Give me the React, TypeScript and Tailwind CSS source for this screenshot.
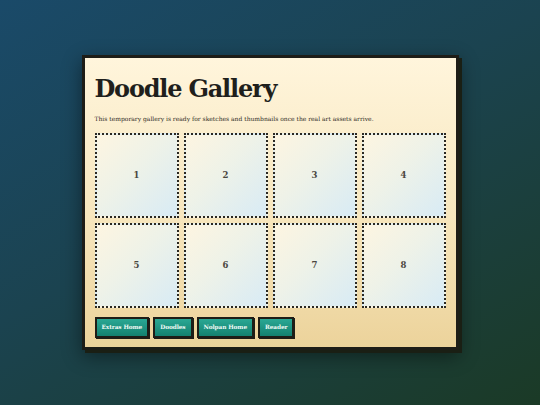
const tiles = [1, 2, 3, 4, 5, 6, 7, 8];

const links = ['Extras Home', 'Doodles', 'Nolpan Home', 'Reader'];

export default function App() {
  return (
    <div className="min-h-screen w-full flex items-center justify-center bg-[linear-gradient(150deg,#1a4a69_0%,#1b4350_45%,#1b3a26_100%)] font-['DejaVu_Serif',serif]">
      <div className="w-[377px] border-[3px] border-[#1e1d17] bg-[linear-gradient(180deg,#fff5dc_0%,#f7e6bd_55%,#ecd39b_100%)] px-[10px] pt-[15px] pb-[9px] shadow-[3px_3px_0_#1a1f14,0_6px_18px_rgba(0,0,0,0.45)]">
        <h1 className="text-[24px] leading-[32px] font-bold text-[#1f1f1c] tracking-[-1.2px]">Doodle Gallery</h1>
        <p className="mt-[9px] text-[6px] leading-[10px] text-[#2d2a24]">
          This temporary gallery is ready for sketches and thumbnails once the real art assets arrive.
        </p>
        <div className="mt-[9px] grid grid-cols-4 gap-[5px]">
          {tiles.map((n) => (
            <div
              key={n}
              className="h-[85px] flex items-center justify-center border-2 border-dotted border-[#2a2822] bg-[linear-gradient(135deg,#fdf5e1_0%,#eef2e8_45%,#d8ebf5_100%)] text-[8.5px] font-bold text-[#4a4740]"
            >
              {n}
            </div>
          ))}
        </div>
        <div className="mt-[9px] flex gap-[4px]">
          {links.map((label) => (
            <a
              key={label}
              href="#"
              className="h-[21px] px-[5px] flex items-center border-2 border-[#1e1d17] bg-[linear-gradient(180deg,#2aa894_0%,#14806f_100%)] text-[5.8px] font-bold tracking-[-0.1px] text-[#eefaf5] shadow-[1px_1px_0_#1e1d17]"
            >
              {label}
            </a>
          ))}
        </div>
      </div>
    </div>
  );
}
